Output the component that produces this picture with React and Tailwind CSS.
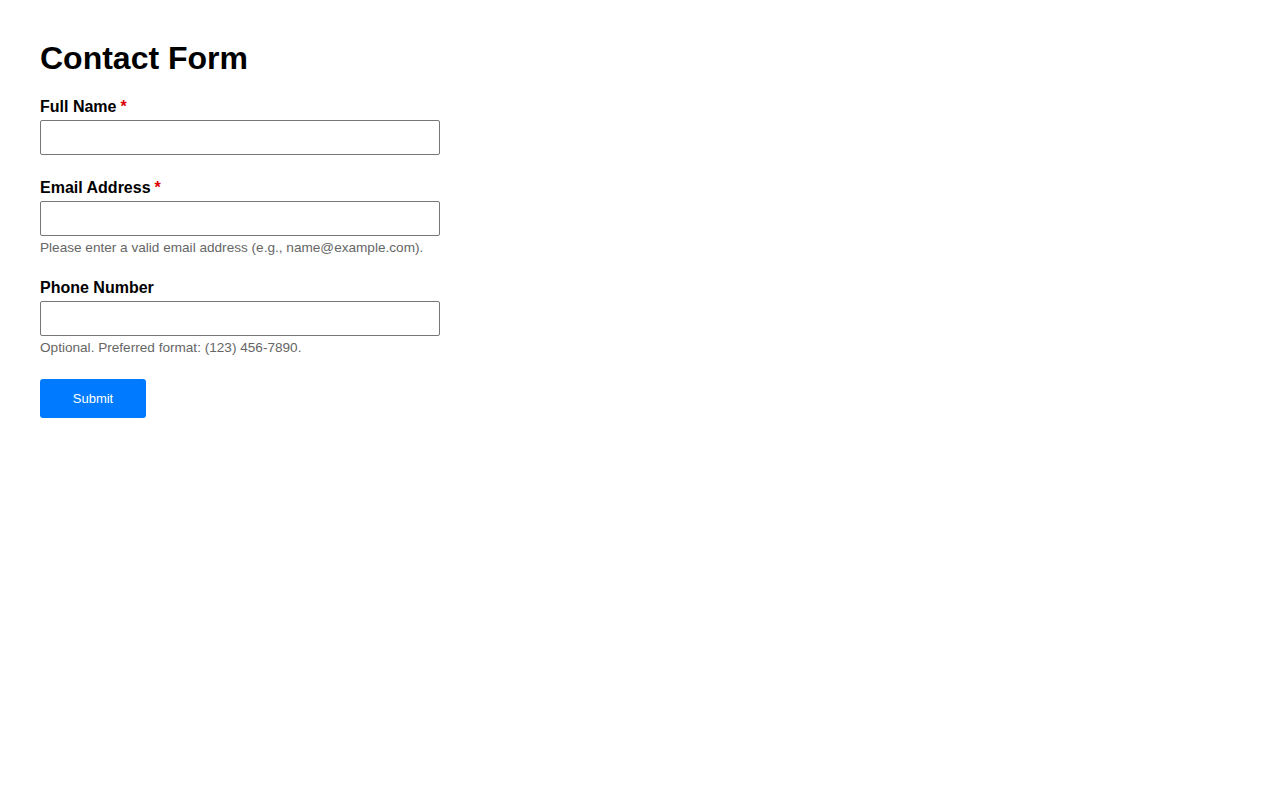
import React from 'react';

const fields = [
  { id: 'fullName', label: 'Full Name', type: 'text', required: true },
  {
    id: 'email',
    label: 'Email Address',
    type: 'email',
    required: true,
    hint: 'Please enter a valid email address (e.g., name@example.com).',
  },
  {
    id: 'phone',
    label: 'Phone Number',
    type: 'tel',
    hint: 'Optional. Preferred format: (123) 456-7890.',
  },
];

export default function App() {
  return (
    <div className="min-h-screen bg-white px-10 pt-10 font-['Liberation_Sans',Arial,sans-serif] text-black">
      <h1 className="mb-[21px] text-[32px] font-bold leading-[37px]">Contact Form</h1>

      <form onSubmit={(e) => e.preventDefault()}>
        {fields.map((f) => (
          <div key={f.id} className="mb-6">
            <label htmlFor={f.id} className="mb-1 block text-base font-bold leading-[18px]">
              {f.label}
              {f.required && <span className="ml-1 text-[#e00000]">*</span>}
            </label>
            <input
              id={f.id}
              type={f.type}
              className="block h-[35px] w-[400px] rounded-[2px] border border-[#767676] px-2 text-base outline-none"
            />
            {f.hint && (
              <p className="mt-1 text-[13.6px] leading-[15px] text-[#666666]">{f.hint}</p>
            )}
          </div>
        ))}

        <button
          type="submit"
          className="h-[39px] w-[106px] rounded-[3px] bg-[#007bff] text-[13px] text-white"
        >
          Submit
        </button>
      </form>
    </div>
  );
}
